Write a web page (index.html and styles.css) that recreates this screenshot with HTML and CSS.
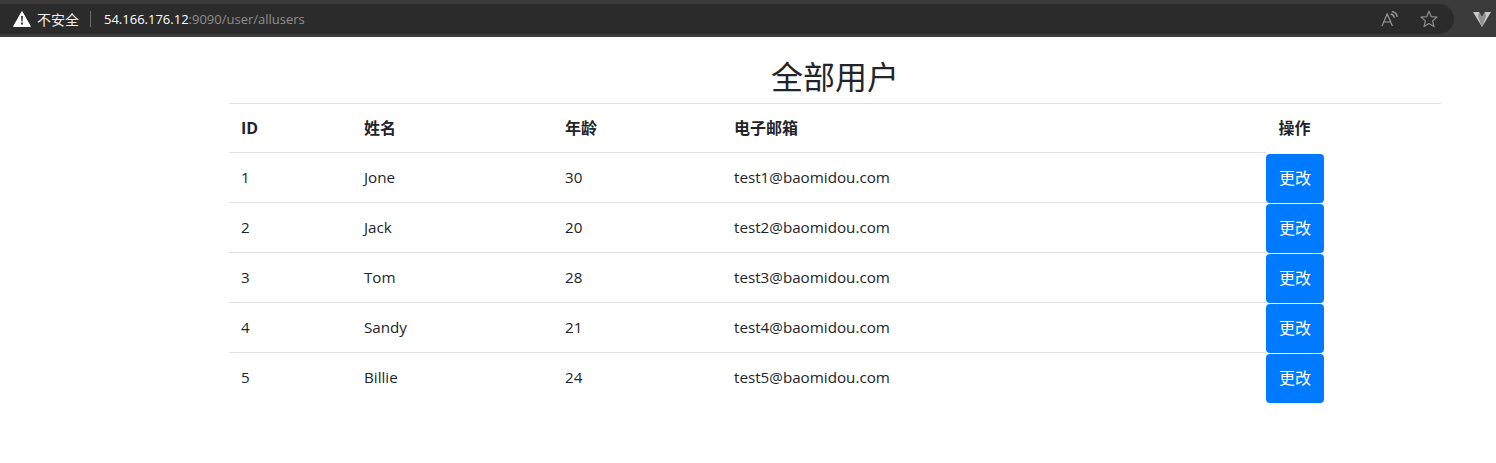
FILE: index.html
```html
<!DOCTYPE html>
<html lang="zh-CN">
<head>
<meta charset="utf-8">
<title>全部用户</title>
<link rel="stylesheet" href="styles.css">
</head>
<body>
<header class="browser">
  <div class="omnibox">
    <div class="site">
      <svg class="warn" width="18" height="16" viewBox="0 0 18 16"><path d="M9 .6 17.4 15.4H.6Z" fill="#fff" stroke="#fff" stroke-linejoin="round"/><path d="M8.1 5h1.8l-.3 5.6H8.4ZM8.1 11.6h1.8v1.8H8.1Z" fill="#2b2b2b"/></svg>
      <span class="insecure">不安全</span>
    </div>
    <span class="divider"></span>
    <span class="url"><span class="host">54.166.176.12</span>:9090/user/allusers</span>
    <div class="tools">
      <svg width="18" height="16" viewBox="0 0 18 16" fill="none" stroke="#999" stroke-width="1.2"><path d="M1 15 6.2 3 11.4 15M3 11h6.6"/><path d="M9.6 3c2 .2 3.4 1.6 3.8 3.6M10.8.6c3 .3 5 2.4 5.4 5.2" stroke-width="1.4"/></svg>
      <svg width="18" height="18" viewBox="0 0 18 18" fill="none" stroke="#8f8f8f" stroke-width="1.2" stroke-linejoin="round"><path d="M9 1.2 11.2 6.6 17 7.1 12.6 10.9 14 16.6 9 13.6 4 16.6 5.4 10.9 1 7.1 6.8 6.6Z"/></svg>
    </div>
  </div>
  <svg class="brand" width="18" height="15" viewBox="0 0 18 15"><path d="M0 0H6L9 5 12 0H18L9 15Z" fill="#c8c8c8"/><path d="M6 0 9 5 12 0 13 4 9 15 5 4Z" fill="#8f8f8f"/></svg>
</header>
<main class="page">
  <h1 class="title">全部用户</h1>
  <table class="users">
    <colgroup>
      <col class="c-id"><col class="c-name"><col class="c-age"><col class="c-email"><col class="c-act">
    </colgroup>
    <thead>
      <tr><th class="id-head">ID</th><th>姓名</th><th>年龄</th><th>电子邮箱</th><th class="act-head">操作</th></tr>
    </thead>
    <tbody>
      <tr><td>1</td><td>Jone</td><td>30</td><td>test1@baomidou.com</td><td class="act"><button class="btn">更改</button></td></tr>
      <tr><td>2</td><td>Jack</td><td>20</td><td>test2@baomidou.com</td><td class="act"><button class="btn">更改</button></td></tr>
      <tr><td>3</td><td>Tom</td><td>28</td><td>test3@baomidou.com</td><td class="act"><button class="btn">更改</button></td></tr>
      <tr><td>4</td><td>Sandy</td><td>21</td><td>test4@baomidou.com</td><td class="act"><button class="btn">更改</button></td></tr>
      <tr><td>5</td><td>Billie</td><td>24</td><td>test5@baomidou.com</td><td class="act"><button class="btn">更改</button></td></tr>
    </tbody>
  </table>
</main>
</body>
</html>
```
FILE: styles.css
```css
* { box-sizing: border-box; }
html, body { margin: 0; background: #fff; }
body {
  font-family: "Open Sans", "Noto Sans CJK SC", sans-serif;
  font-size: 15.2px;
  color: #212529;
  height: 463px;
  overflow: hidden;
}
.browser {
  height: 37px;
  background: #3b3b3b;
  display: flex;
  align-items: center;
  padding: 1px 0 0;
}
.omnibox {
  width: 1454px;
  height: 30px;
  background: #2b2b2b;
  border-radius: 0 15px 15px 0;
  display: flex;
  align-items: center;
  padding: 0 16px 0 13px;
  font-size: 13px;
  flex: none;
}
.site { display: flex; align-items: center; gap: 6px; color: #fff; }
.warn { flex: none; }
.insecure { font-family: "Noto Sans CJK SC", sans-serif; font-size: 14px; color: #f0f0f0; }
.divider { width: 1px; height: 16px; background: #6a6a6a; margin: 0 13px 0 11px; }
.url { color: #8f8f8f; font-family: "Open Sans", sans-serif; font-size: 13px; }
.host { color: #fff; }
.tools { margin-left: auto; display: flex; align-items: center; gap: 21px; }
.brand { margin-left: 19px; flex: none; }
.page { margin: 0 55px 0 229px; }
.title {
  margin: 0;
  height: 67px;
  padding-top: 16px;
  font-size: 32px;
  line-height: 48px;
  font-weight: 400;
  text-align: center;
  border-bottom: 1px solid #dee2e6;
}
.users { table-layout: fixed; width: 1095px; border-collapse: separate; border-spacing: 0; }
.c-id { width: 123px; }
.c-name { width: 201px; }
.c-age { width: 169px; }
.c-email { width: 544px; }
.c-act { width: 58px; }
.users th, .users td {
  padding: 0 12px 2px;
  height: 50px;
  text-align: left;
  vertical-align: middle;
  border-bottom: 1px solid #dee2e6;
}
.users th { height: 49px; padding-bottom: 3px; font-size: 16px; font-weight: 700; }
.users .id-head { padding-bottom: 1px; }
.users tbody tr:last-child td { border-bottom: 0; }
.users .act-head { text-align: center; border-bottom: 0; padding: 0 1px 3px 0; }
.users .act { padding: 0; border-bottom: 0; vertical-align: top; }
.btn {
  display: block;
  width: 58px;
  height: 49px;
  margin-top: 1px;
  padding: 0 0 3px;
  border: 0;
  border-radius: 4px;
  background: #007bff;
  color: #fff;
  font: 16px "Noto Sans CJK SC", sans-serif;
}
```
